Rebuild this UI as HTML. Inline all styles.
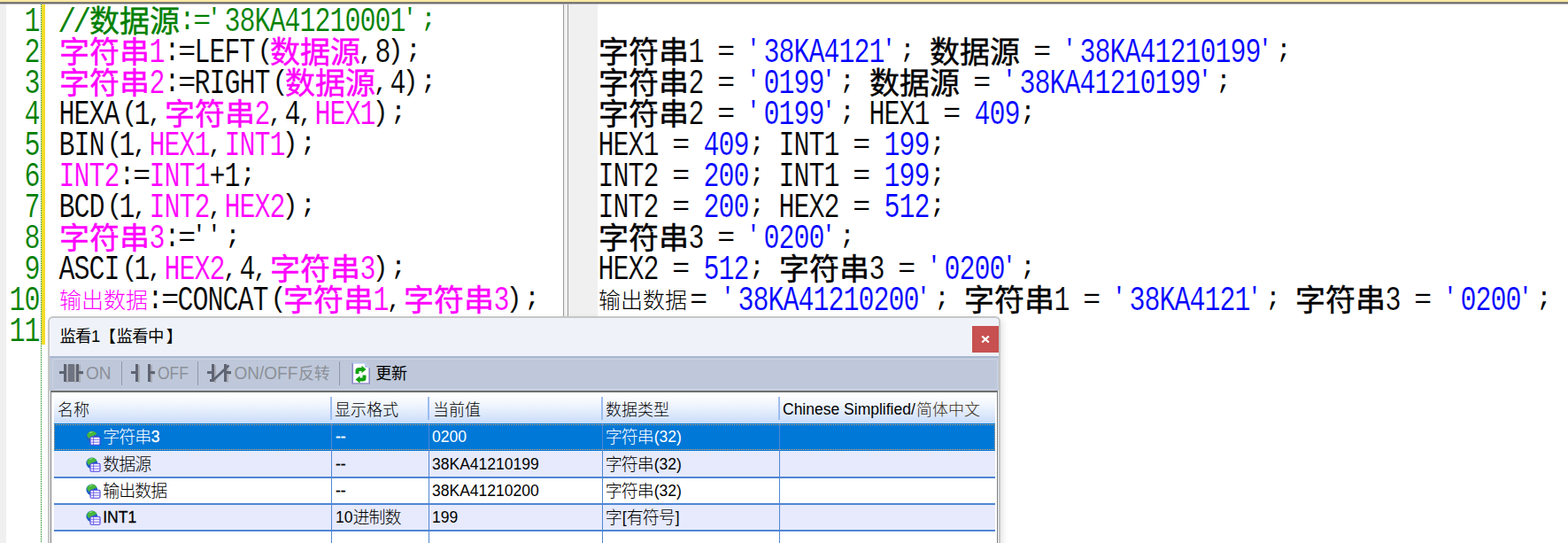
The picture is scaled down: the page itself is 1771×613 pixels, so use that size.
<!DOCTYPE html>
<html lang="zh">
<head>
<meta charset="utf-8">
<title>ST monitor</title>
<style>
html,body{margin:0;padding:0;background:#fff;}
body{width:1771px;height:613px;position:relative;overflow:hidden;font-family:"Liberation Sans",sans-serif;}
#page{position:absolute;left:0;top:0;width:1771px;height:613px;overflow:hidden;background:#fff;}
#page div,#page span,#page svg{position:absolute;}
.m{font-family:"Liberation Mono",monospace;font-size:30.0000px;line-height:1;white-space:pre;letter-spacing:-1.0000px;-webkit-text-stroke:0.18px #fff;transform-origin:0 0;transform:scaleY(1.2747);}
.p{transform:none;}
.s{font-family:"Liberation Sans",sans-serif;line-height:1;white-space:pre;}
.b{-webkit-text-stroke:0.3px currentColor;}
.c{overflow:visible;}
.k{font-family:"Liberation Sans","Noto Sans CJK SC",sans-serif;line-height:1;white-space:pre;margin-top:.03em;}
.g{font-size:34px;-webkit-text-stroke:.45px currentColor;}
.l{font-weight:300;}
.l25{font-size:25px;}
.l18{font-size:18px;}
.l19{font-size:19px;letter-spacing:-1px;}
</style>
</head>
<body>
<div id="page">
<!-- editor chrome -->
<div style="left:0;top:0;width:7px;height:613px;background:#f0f0f0"></div>
<div style="left:642px;top:5px;width:33px;height:608px;background:#f0f0f0"></div>
<div style="left:636px;top:4px;width:6px;height:609px;background:#f0f0f0;border-left:1px solid #9a9a9a;border-right:1px solid #9a9a9a;box-sizing:border-box"></div>
<div style="left:46px;top:5px;width:1px;height:608px;background:repeating-linear-gradient(to bottom,#008000 0 1px,#fff 1px 2px)"></div>
<div style="left:47px;top:5px;width:4px;height:384px;background:#f5dc2a"></div>
<div style="left:0;top:0;width:1771px;height:2px;background:#ffe8a2"></div>
<div style="left:0;top:2px;width:1771px;height:1px;background:#8c8880"></div>
<div style="left:0;top:3px;width:1771px;height:1px;background:#6a6a6a"></div>
<div style="left:0;top:4px;width:1771px;height:1px;background:#b4b4b4"></div>
<!-- code -->
<span class="m" style="left:27.50px;top:5.70px;color:#008000">1</span>
<span class="m" style="left:27.50px;top:40.70px;color:#008000">2</span>
<span class="m" style="left:27.50px;top:75.70px;color:#008000">3</span>
<span class="m" style="left:27.50px;top:110.70px;color:#008000">4</span>
<span class="m" style="left:27.50px;top:145.70px;color:#008000">5</span>
<span class="m" style="left:27.50px;top:180.70px;color:#008000">6</span>
<span class="m" style="left:27.50px;top:215.70px;color:#008000">7</span>
<span class="m" style="left:27.50px;top:250.70px;color:#008000">8</span>
<span class="m" style="left:27.50px;top:285.70px;color:#008000">9</span>
<span class="m" style="left:10.50px;top:320.70px;color:#008000">10</span>
<span class="m" style="left:10.50px;top:355.70px;color:#008000">11</span>
<span class="m" style="left:64.80px;top:5.70px;color:#008000;font-size:31px;transform:scale(1.15,1.2336)">/</span>
<span class="m" style="left:81.80px;top:5.70px;color:#008000;font-size:31px;transform:scale(1.15,1.2336)">/</span>
<span class="k g" style="left:101.00px;top:5.58px;color:#008000">数据源</span>
<span class="m" style="left:203.10px;top:5.81px;color:#008000;font-size:28px;transform:scaleY(1.3);-webkit-text-stroke:0">:</span>
<span class="m" style="left:218.32px;top:8.34px;color:#008000;font-size:29px;transform:scale(1.17,1.11)">=</span>
<span class="m" style="left:233.60px;top:6.55px;color:#008000;font-size:28px;transform:scaleY(1)">'</span>
<span class="m" style="left:253.50px;top:5.70px;color:#008000">38KA41210001</span>
<span class="m" style="left:454.60px;top:6.55px;color:#008000;font-size:28px;transform:scaleY(1)">'</span>
<span class="m" style="left:475.30px;top:7.98px;color:#008000;font-size:29px;transform:scaleY(1);-webkit-text-stroke:0">;</span>
<span class="k g" style="left:67.00px;top:40.58px;color:#ff00ff">字符串</span>
<span class="m" style="left:168.50px;top:40.70px;color:#ff00ff">1</span>
<span class="m" style="left:186.10px;top:40.81px;color:#000000;font-size:28px;transform:scaleY(1.3);-webkit-text-stroke:0">:</span>
<span class="m" style="left:201.32px;top:43.34px;color:#000000;font-size:29px;transform:scale(1.17,1.11)">=</span>
<span class="m" style="left:219.50px;top:40.70px;color:#000000">LEFT</span>
<span class="m" style="left:290.20px;top:42.25px;color:#000000;font-size:31px;transform:scaleY(1)">(</span>
<span class="k g" style="left:305.00px;top:40.58px;color:#ff00ff">数据源</span>
<span class="m" style="left:405.20px;top:47.08px;color:#000000;font-size:26px;transform:scaleY(1);-webkit-text-stroke:0">,</span>
<span class="m" style="left:423.50px;top:40.70px;color:#000000">8</span>
<span class="m" style="left:437.20px;top:42.25px;color:#000000;font-size:31px;transform:scaleY(1)">)</span>
<span class="m" style="left:458.30px;top:42.98px;color:#000000;font-size:29px;transform:scaleY(1);-webkit-text-stroke:0">;</span>
<span class="k g" style="left:67.00px;top:75.58px;color:#ff00ff">字符串</span>
<span class="m" style="left:168.50px;top:75.70px;color:#ff00ff">2</span>
<span class="m" style="left:186.10px;top:75.81px;color:#000000;font-size:28px;transform:scaleY(1.3);-webkit-text-stroke:0">:</span>
<span class="m" style="left:201.32px;top:78.34px;color:#000000;font-size:29px;transform:scale(1.17,1.11)">=</span>
<span class="m" style="left:219.50px;top:75.70px;color:#000000">RIGHT</span>
<span class="m" style="left:307.20px;top:77.25px;color:#000000;font-size:31px;transform:scaleY(1)">(</span>
<span class="k g" style="left:322.00px;top:75.58px;color:#ff00ff">数据源</span>
<span class="m" style="left:422.20px;top:82.08px;color:#000000;font-size:26px;transform:scaleY(1);-webkit-text-stroke:0">,</span>
<span class="m" style="left:440.50px;top:75.70px;color:#000000">4</span>
<span class="m" style="left:454.20px;top:77.25px;color:#000000;font-size:31px;transform:scaleY(1)">)</span>
<span class="m" style="left:475.30px;top:77.98px;color:#000000;font-size:29px;transform:scaleY(1);-webkit-text-stroke:0">;</span>
<span class="m" style="left:66.50px;top:110.70px;color:#000000">HEXA</span>
<span class="m" style="left:137.20px;top:112.25px;color:#000000;font-size:31px;transform:scaleY(1)">(</span>
<span class="m" style="left:151.50px;top:110.70px;color:#000000">1</span>
<span class="m" style="left:167.20px;top:117.08px;color:#000000;font-size:26px;transform:scaleY(1);-webkit-text-stroke:0">,</span>
<span class="k g" style="left:186.00px;top:110.58px;color:#ff00ff">字符串</span>
<span class="m" style="left:287.50px;top:110.70px;color:#ff00ff">2</span>
<span class="m" style="left:303.20px;top:117.08px;color:#000000;font-size:26px;transform:scaleY(1);-webkit-text-stroke:0">,</span>
<span class="m" style="left:321.50px;top:110.70px;color:#000000">4</span>
<span class="m" style="left:337.20px;top:117.08px;color:#000000;font-size:26px;transform:scaleY(1);-webkit-text-stroke:0">,</span>
<span class="m" style="left:355.50px;top:110.70px;color:#ff00ff">HEX1</span>
<span class="m" style="left:420.20px;top:112.25px;color:#000000;font-size:31px;transform:scaleY(1)">)</span>
<span class="m" style="left:441.30px;top:112.98px;color:#000000;font-size:29px;transform:scaleY(1);-webkit-text-stroke:0">;</span>
<span class="m" style="left:66.50px;top:145.70px;color:#000000">BIN</span>
<span class="m" style="left:120.20px;top:147.25px;color:#000000;font-size:31px;transform:scaleY(1)">(</span>
<span class="m" style="left:134.50px;top:145.70px;color:#000000">1</span>
<span class="m" style="left:150.20px;top:152.08px;color:#000000;font-size:26px;transform:scaleY(1);-webkit-text-stroke:0">,</span>
<span class="m" style="left:168.50px;top:145.70px;color:#ff00ff">HEX1</span>
<span class="m" style="left:235.20px;top:152.08px;color:#000000;font-size:26px;transform:scaleY(1);-webkit-text-stroke:0">,</span>
<span class="m" style="left:253.50px;top:145.70px;color:#ff00ff">INT1</span>
<span class="m" style="left:318.20px;top:147.25px;color:#000000;font-size:31px;transform:scaleY(1)">)</span>
<span class="m" style="left:339.30px;top:147.98px;color:#000000;font-size:29px;transform:scaleY(1);-webkit-text-stroke:0">;</span>
<span class="m" style="left:66.50px;top:180.70px;color:#ff00ff">INT2</span>
<span class="m" style="left:135.10px;top:180.81px;color:#000000;font-size:28px;transform:scaleY(1.3);-webkit-text-stroke:0">:</span>
<span class="m" style="left:150.32px;top:183.34px;color:#000000;font-size:29px;transform:scale(1.17,1.11)">=</span>
<span class="m" style="left:168.50px;top:180.70px;color:#ff00ff">INT1</span>
<span class="m" style="left:236.50px;top:180.70px;color:#000000">+1</span>
<span class="m" style="left:271.30px;top:182.98px;color:#000000;font-size:29px;transform:scaleY(1);-webkit-text-stroke:0">;</span>
<span class="m" style="left:66.50px;top:215.70px;color:#000000">BCD</span>
<span class="m" style="left:120.20px;top:217.25px;color:#000000;font-size:31px;transform:scaleY(1)">(</span>
<span class="m" style="left:134.50px;top:215.70px;color:#000000">1</span>
<span class="m" style="left:150.20px;top:222.08px;color:#000000;font-size:26px;transform:scaleY(1);-webkit-text-stroke:0">,</span>
<span class="m" style="left:168.50px;top:215.70px;color:#ff00ff">INT2</span>
<span class="m" style="left:235.20px;top:222.08px;color:#000000;font-size:26px;transform:scaleY(1);-webkit-text-stroke:0">,</span>
<span class="m" style="left:253.50px;top:215.70px;color:#ff00ff">HEX2</span>
<span class="m" style="left:318.20px;top:217.25px;color:#000000;font-size:31px;transform:scaleY(1)">)</span>
<span class="m" style="left:339.30px;top:217.98px;color:#000000;font-size:29px;transform:scaleY(1);-webkit-text-stroke:0">;</span>
<span class="k g" style="left:67.00px;top:250.58px;color:#ff00ff">字符串</span>
<span class="m" style="left:168.50px;top:250.70px;color:#ff00ff">3</span>
<span class="m" style="left:186.10px;top:250.81px;color:#000000;font-size:28px;transform:scaleY(1.3);-webkit-text-stroke:0">:</span>
<span class="m" style="left:201.32px;top:253.34px;color:#000000;font-size:29px;transform:scale(1.17,1.11)">=</span>
<span class="m" style="left:216.60px;top:251.55px;color:#000000;font-size:28px;transform:scaleY(1)">'</span>
<span class="m" style="left:233.60px;top:251.55px;color:#000000;font-size:28px;transform:scaleY(1)">'</span>
<span class="m" style="left:254.30px;top:252.98px;color:#000000;font-size:29px;transform:scaleY(1);-webkit-text-stroke:0">;</span>
<span class="m" style="left:66.50px;top:285.70px;color:#000000">ASCI</span>
<span class="m" style="left:137.20px;top:287.25px;color:#000000;font-size:31px;transform:scaleY(1)">(</span>
<span class="m" style="left:151.50px;top:285.70px;color:#000000">1</span>
<span class="m" style="left:167.20px;top:292.08px;color:#000000;font-size:26px;transform:scaleY(1);-webkit-text-stroke:0">,</span>
<span class="m" style="left:185.50px;top:285.70px;color:#ff00ff">HEX2</span>
<span class="m" style="left:252.20px;top:292.08px;color:#000000;font-size:26px;transform:scaleY(1);-webkit-text-stroke:0">,</span>
<span class="m" style="left:270.50px;top:285.70px;color:#000000">4</span>
<span class="m" style="left:286.20px;top:292.08px;color:#000000;font-size:26px;transform:scaleY(1);-webkit-text-stroke:0">,</span>
<span class="k g" style="left:305.00px;top:285.58px;color:#ff00ff">字符串</span>
<span class="m" style="left:406.50px;top:285.70px;color:#ff00ff">3</span>
<span class="m" style="left:420.20px;top:287.25px;color:#000000;font-size:31px;transform:scaleY(1)">)</span>
<span class="m" style="left:441.30px;top:287.98px;color:#000000;font-size:29px;transform:scaleY(1);-webkit-text-stroke:0">;</span>
<span class="k l l25" style="left:67.00px;top:326.70px;color:#ff00ff">输出数据</span>
<span class="m" style="left:167.10px;top:320.81px;color:#000000;font-size:28px;transform:scaleY(1.3);-webkit-text-stroke:0">:</span>
<span class="m" style="left:182.32px;top:323.34px;color:#000000;font-size:29px;transform:scale(1.17,1.11)">=</span>
<span class="m" style="left:200.50px;top:320.70px;color:#000000">CONCAT</span>
<span class="m" style="left:305.20px;top:322.25px;color:#000000;font-size:31px;transform:scaleY(1)">(</span>
<span class="k g" style="left:320.00px;top:320.58px;color:#ff00ff">字符串</span>
<span class="m" style="left:421.50px;top:320.70px;color:#ff00ff">1</span>
<span class="m" style="left:437.20px;top:327.08px;color:#000000;font-size:26px;transform:scaleY(1);-webkit-text-stroke:0">,</span>
<span class="k g" style="left:456.00px;top:320.58px;color:#ff00ff">字符串</span>
<span class="m" style="left:557.50px;top:320.70px;color:#ff00ff">3</span>
<span class="m" style="left:571.20px;top:322.25px;color:#000000;font-size:31px;transform:scaleY(1)">)</span>
<span class="m" style="left:592.30px;top:322.98px;color:#000000;font-size:29px;transform:scaleY(1);-webkit-text-stroke:0">;</span>
<span class="k g" style="left:676.00px;top:40.58px;color:#000000">字符串</span>
<span class="m" style="left:777.50px;top:40.70px;color:#000000">1 </span>
<span class="m" style="left:810.32px;top:43.34px;color:#000000;font-size:29px;transform:scale(1.17,1.11)">=</span>
<span class="m" style="left:842.60px;top:41.55px;color:#0000ff;font-size:28px;transform:scaleY(1)">'</span>
<span class="m" style="left:862.50px;top:40.70px;color:#0000ff">38KA4121</span>
<span class="m" style="left:995.60px;top:41.55px;color:#0000ff;font-size:28px;transform:scaleY(1)">'</span>
<span class="m" style="left:1016.30px;top:42.98px;color:#000000;font-size:29px;transform:scaleY(1);-webkit-text-stroke:0">;</span>
<span class="k g" style="left:1050.00px;top:40.58px;color:#000000">数据源</span>
<span class="m" style="left:1167.32px;top:43.34px;color:#000000;font-size:29px;transform:scale(1.17,1.11)">=</span>
<span class="m" style="left:1199.60px;top:41.55px;color:#0000ff;font-size:28px;transform:scaleY(1)">'</span>
<span class="m" style="left:1219.50px;top:40.70px;color:#0000ff">38KA41210199</span>
<span class="m" style="left:1420.60px;top:41.55px;color:#0000ff;font-size:28px;transform:scaleY(1)">'</span>
<span class="m" style="left:1441.30px;top:42.98px;color:#000000;font-size:29px;transform:scaleY(1);-webkit-text-stroke:0">;</span>
<span class="k g" style="left:676.00px;top:75.58px;color:#000000">字符串</span>
<span class="m" style="left:777.50px;top:75.70px;color:#000000">2 </span>
<span class="m" style="left:810.32px;top:78.34px;color:#000000;font-size:29px;transform:scale(1.17,1.11)">=</span>
<span class="m" style="left:842.60px;top:76.55px;color:#0000ff;font-size:28px;transform:scaleY(1)">'</span>
<span class="m" style="left:862.50px;top:75.70px;color:#0000ff">0199</span>
<span class="m" style="left:927.60px;top:76.55px;color:#0000ff;font-size:28px;transform:scaleY(1)">'</span>
<span class="m" style="left:948.30px;top:77.98px;color:#000000;font-size:29px;transform:scaleY(1);-webkit-text-stroke:0">;</span>
<span class="k g" style="left:982.00px;top:75.58px;color:#000000">数据源</span>
<span class="m" style="left:1099.32px;top:78.34px;color:#000000;font-size:29px;transform:scale(1.17,1.11)">=</span>
<span class="m" style="left:1131.60px;top:76.55px;color:#0000ff;font-size:28px;transform:scaleY(1)">'</span>
<span class="m" style="left:1151.50px;top:75.70px;color:#0000ff">38KA41210199</span>
<span class="m" style="left:1352.60px;top:76.55px;color:#0000ff;font-size:28px;transform:scaleY(1)">'</span>
<span class="m" style="left:1373.30px;top:77.98px;color:#000000;font-size:29px;transform:scaleY(1);-webkit-text-stroke:0">;</span>
<span class="k g" style="left:676.00px;top:110.58px;color:#000000">字符串</span>
<span class="m" style="left:777.50px;top:110.70px;color:#000000">2 </span>
<span class="m" style="left:810.32px;top:113.34px;color:#000000;font-size:29px;transform:scale(1.17,1.11)">=</span>
<span class="m" style="left:842.60px;top:111.55px;color:#0000ff;font-size:28px;transform:scaleY(1)">'</span>
<span class="m" style="left:862.50px;top:110.70px;color:#0000ff">0199</span>
<span class="m" style="left:927.60px;top:111.55px;color:#0000ff;font-size:28px;transform:scaleY(1)">'</span>
<span class="m" style="left:948.30px;top:112.98px;color:#000000;font-size:29px;transform:scaleY(1);-webkit-text-stroke:0">;</span>
<span class="m" style="left:964.50px;top:110.70px;color:#000000"> HEX1 </span>
<span class="m" style="left:1065.32px;top:113.34px;color:#000000;font-size:29px;transform:scale(1.17,1.11)">=</span>
<span class="m" style="left:1100.50px;top:110.70px;color:#0000ff">409</span>
<span class="m" style="left:1152.30px;top:112.98px;color:#000000;font-size:29px;transform:scaleY(1);-webkit-text-stroke:0">;</span>
<span class="m" style="left:675.50px;top:145.70px;color:#000000">HEX1 </span>
<span class="m" style="left:759.32px;top:148.34px;color:#000000;font-size:29px;transform:scale(1.17,1.11)">=</span>
<span class="m" style="left:794.50px;top:145.70px;color:#0000ff">409</span>
<span class="m" style="left:846.30px;top:147.98px;color:#000000;font-size:29px;transform:scaleY(1);-webkit-text-stroke:0">;</span>
<span class="m" style="left:862.50px;top:145.70px;color:#000000"> INT1 </span>
<span class="m" style="left:963.32px;top:148.34px;color:#000000;font-size:29px;transform:scale(1.17,1.11)">=</span>
<span class="m" style="left:998.50px;top:145.70px;color:#0000ff">199</span>
<span class="m" style="left:1050.30px;top:147.98px;color:#000000;font-size:29px;transform:scaleY(1);-webkit-text-stroke:0">;</span>
<span class="m" style="left:675.50px;top:180.70px;color:#000000">INT2 </span>
<span class="m" style="left:759.32px;top:183.34px;color:#000000;font-size:29px;transform:scale(1.17,1.11)">=</span>
<span class="m" style="left:794.50px;top:180.70px;color:#0000ff">200</span>
<span class="m" style="left:846.30px;top:182.98px;color:#000000;font-size:29px;transform:scaleY(1);-webkit-text-stroke:0">;</span>
<span class="m" style="left:862.50px;top:180.70px;color:#000000"> INT1 </span>
<span class="m" style="left:963.32px;top:183.34px;color:#000000;font-size:29px;transform:scale(1.17,1.11)">=</span>
<span class="m" style="left:998.50px;top:180.70px;color:#0000ff">199</span>
<span class="m" style="left:1050.30px;top:182.98px;color:#000000;font-size:29px;transform:scaleY(1);-webkit-text-stroke:0">;</span>
<span class="m" style="left:675.50px;top:215.70px;color:#000000">INT2 </span>
<span class="m" style="left:759.32px;top:218.34px;color:#000000;font-size:29px;transform:scale(1.17,1.11)">=</span>
<span class="m" style="left:794.50px;top:215.70px;color:#0000ff">200</span>
<span class="m" style="left:846.30px;top:217.98px;color:#000000;font-size:29px;transform:scaleY(1);-webkit-text-stroke:0">;</span>
<span class="m" style="left:862.50px;top:215.70px;color:#000000"> HEX2 </span>
<span class="m" style="left:963.32px;top:218.34px;color:#000000;font-size:29px;transform:scale(1.17,1.11)">=</span>
<span class="m" style="left:998.50px;top:215.70px;color:#0000ff">512</span>
<span class="m" style="left:1050.30px;top:217.98px;color:#000000;font-size:29px;transform:scaleY(1);-webkit-text-stroke:0">;</span>
<span class="k g" style="left:676.00px;top:250.58px;color:#000000">字符串</span>
<span class="m" style="left:777.50px;top:250.70px;color:#000000">3 </span>
<span class="m" style="left:810.32px;top:253.34px;color:#000000;font-size:29px;transform:scale(1.17,1.11)">=</span>
<span class="m" style="left:842.60px;top:251.55px;color:#0000ff;font-size:28px;transform:scaleY(1)">'</span>
<span class="m" style="left:862.50px;top:250.70px;color:#0000ff">0200</span>
<span class="m" style="left:927.60px;top:251.55px;color:#0000ff;font-size:28px;transform:scaleY(1)">'</span>
<span class="m" style="left:948.30px;top:252.98px;color:#000000;font-size:29px;transform:scaleY(1);-webkit-text-stroke:0">;</span>
<span class="m" style="left:675.50px;top:285.70px;color:#000000">HEX2 </span>
<span class="m" style="left:759.32px;top:288.34px;color:#000000;font-size:29px;transform:scale(1.17,1.11)">=</span>
<span class="m" style="left:794.50px;top:285.70px;color:#0000ff">512</span>
<span class="m" style="left:846.30px;top:287.98px;color:#000000;font-size:29px;transform:scaleY(1);-webkit-text-stroke:0">;</span>
<span class="k g" style="left:880.00px;top:285.58px;color:#000000">字符串</span>
<span class="m" style="left:981.50px;top:285.70px;color:#000000">3 </span>
<span class="m" style="left:1014.32px;top:288.34px;color:#000000;font-size:29px;transform:scale(1.17,1.11)">=</span>
<span class="m" style="left:1046.60px;top:286.55px;color:#0000ff;font-size:28px;transform:scaleY(1)">'</span>
<span class="m" style="left:1066.50px;top:285.70px;color:#0000ff">0200</span>
<span class="m" style="left:1131.60px;top:286.55px;color:#0000ff;font-size:28px;transform:scaleY(1)">'</span>
<span class="m" style="left:1152.30px;top:287.98px;color:#000000;font-size:29px;transform:scaleY(1);-webkit-text-stroke:0">;</span>
<span class="k l l25" style="left:676.00px;top:326.70px;color:#000000">输出数据</span>
<span class="m" style="left:779.32px;top:323.34px;color:#000000;font-size:29px;transform:scale(1.17,1.11)">=</span>
<span class="m" style="left:813.60px;top:321.55px;color:#0000ff;font-size:28px;transform:scaleY(1)">'</span>
<span class="m" style="left:833.50px;top:320.70px;color:#0000ff">38KA41210200</span>
<span class="m" style="left:1034.60px;top:321.55px;color:#0000ff;font-size:28px;transform:scaleY(1)">'</span>
<span class="m" style="left:1055.30px;top:322.98px;color:#000000;font-size:29px;transform:scaleY(1);-webkit-text-stroke:0">;</span>
<span class="k g" style="left:1089.00px;top:320.58px;color:#000000">字符串</span>
<span class="m" style="left:1190.50px;top:320.70px;color:#000000">1 </span>
<span class="m" style="left:1223.32px;top:323.34px;color:#000000;font-size:29px;transform:scale(1.17,1.11)">=</span>
<span class="m" style="left:1255.60px;top:321.55px;color:#0000ff;font-size:28px;transform:scaleY(1)">'</span>
<span class="m" style="left:1275.50px;top:320.70px;color:#0000ff">38KA4121</span>
<span class="m" style="left:1408.60px;top:321.55px;color:#0000ff;font-size:28px;transform:scaleY(1)">'</span>
<span class="m" style="left:1429.30px;top:322.98px;color:#000000;font-size:29px;transform:scaleY(1);-webkit-text-stroke:0">;</span>
<span class="k g" style="left:1463.00px;top:320.58px;color:#000000">字符串</span>
<span class="m" style="left:1564.50px;top:320.70px;color:#000000">3 </span>
<span class="m" style="left:1597.32px;top:323.34px;color:#000000;font-size:29px;transform:scale(1.17,1.11)">=</span>
<span class="m" style="left:1629.60px;top:321.55px;color:#0000ff;font-size:28px;transform:scaleY(1)">'</span>
<span class="m" style="left:1649.50px;top:320.70px;color:#0000ff">0200</span>
<span class="m" style="left:1714.60px;top:321.55px;color:#0000ff;font-size:28px;transform:scaleY(1)">'</span>
<span class="m" style="left:1735.30px;top:322.98px;color:#000000;font-size:29px;transform:scaleY(1);-webkit-text-stroke:0">;</span>
<!-- monitor window -->
<div id="win" style="left:54px;top:357px;width:1076px;height:262px;box-sizing:border-box;border:2px solid #c6c6c6;border-radius:6px 6px 0 0;background:#eff3f9;box-shadow:3px 2px 6px rgba(0,0,0,.10)"></div>
<div style="left:1098px;top:368px;width:30px;height:30px;background:#c75050"></div>
<svg style="left:1108px;top:378px;width:10px;height:10px" viewBox="0 0 10 10"><path d="M1.2 1.5L8.8 8.5M8.8 1.5L1.2 8.5" stroke="#fff" stroke-width="2.3" fill="none"/></svg>
<!-- toolbar -->
<div style="left:56px;top:402px;width:1072px;height:39px;background:#bec8da;border-top:2px solid #a9b7d0;box-sizing:border-box"></div>
<div style="left:59px;top:405px;width:1068px;height:35px;border:1px solid #ccd4e2;border-radius:3px;box-sizing:border-box"></div>
<div style="left:137px;top:408px;width:1px;height:27px;background:#8d98ad"></div>
<div style="left:223px;top:408px;width:1px;height:27px;background:#8d98ad"></div>
<div style="left:383px;top:408px;width:1px;height:27px;background:#8d98ad"></div>
<!-- ON / OFF / toggle icons (page coordinates) -->
<svg style="left:60px;top:403px;width:210px;height:37px" viewBox="60 403 210 37" shape-rendering="crispEdges">
<g fill="#a9abb4"><rect x="75" y="412" width="2" height="20"/><rect x="84" y="412" width="2" height="20"/><rect x="89" y="412" width="2" height="20"/><rect x="91" y="422" width="3" height="1"/>
<rect x="156" y="412" width="2" height="20"/><rect x="170" y="412" width="2" height="20"/><rect x="172" y="422" width="3" height="1"/>
<rect x="242" y="412" width="2" height="20"/><rect x="256" y="412" width="2" height="20"/><rect x="258" y="422" width="3" height="1"/></g>
<g fill="#5f6473"><rect x="67" y="419" width="5" height="3"/><rect x="72" y="411" width="3" height="20"/><rect x="86" y="411" width="3" height="20"/><rect x="89" y="419" width="5" height="3"/>
<rect x="148" y="419" width="5" height="3"/><rect x="153" y="411" width="3" height="20"/><rect x="167" y="411" width="3" height="20"/><rect x="170" y="419" width="5" height="3"/>
<rect x="234" y="419" width="5" height="3"/><rect x="239" y="411" width="3" height="20"/><rect x="253" y="411" width="3" height="20"/><rect x="256" y="419" width="5" height="3"/>
<rect x="237" y="428" width="5" height="3"/></g>
<rect x="77" y="411" width="7" height="20" fill="#6f7482"/>
<path d="M240.500 429.500L258.500 412.500" stroke="#5f6473" stroke-width="2.600" fill="none" shape-rendering="auto"/>
</svg>
<!-- refresh icon -->
<svg style="left:397px;top:409px;width:21px;height:25px" viewBox="0 0 21 25">
<path d="M1.5 .5H15L20.5 6V24.5H1.5Z" fill="#fff"/>
<path d="M15 .5V6H20.5Z" fill="#b9c8f2"/>
<path d="M1.2 .5V24H20.2V6" fill="none" stroke="#8f8bc8" stroke-width="1.7"/>
<path d="M1 .9H15.2" stroke="#a9c0ee" stroke-width="1.3" fill="none"/>
<path d="M4.5 13V9.5Q4.500 6 8.500 6H11.500V3.800L16.500 8 11.500 12.200V10H8.500V13Z" fill="#12a112"/>
<path d="M16.500 14.500V18Q16.500 21.500 12.500 21.500H9.500V23.700L4.500 19.500 9.500 15.300V17.500H12.500V14.500Z" fill="#12a112"/>
</svg>
<!-- list -->
<div style="left:57px;top:441px;width:1070px;height:180px;background:#fff;border:1px solid #7d7d7d;border-top:2px solid #6f6f6f;box-sizing:border-box"></div>
<div style="left:61px;top:445px;width:1063px;height:33px;background:linear-gradient(to bottom,#ffffff 0%,#f1f6fe 35%,#d6e4fb 80%,#c6daf8 100%)"></div>
<div style="left:373px;top:448px;width:2px;height:26px;background:#9cbdf0"></div>
<div style="left:483px;top:448px;width:2px;height:26px;background:#9cbdf0"></div>
<div style="left:679px;top:448px;width:2px;height:26px;background:#9cbdf0"></div>
<div style="left:879px;top:448px;width:2px;height:26px;background:#9cbdf0"></div>
<!-- rows -->
<div style="left:61px;top:478px;width:1063px;height:30.5px;background:#0078d7"></div>
<div style="left:61px;top:479px;width:1063px;height:29px;box-sizing:border-box;border:1px dotted #eda765"></div>
<div style="left:61px;top:508.5px;width:1063px;height:1px;background:#7ea6e6"></div>
<div style="left:61px;top:509px;width:1063px;height:29px;background:#e6eafc"></div>
<div style="left:61px;top:569px;width:1063px;height:29px;background:#e6eafc"></div>
<div style="left:61px;top:538px;width:1063px;height:1.5px;background:#4f86d6"></div>
<div style="left:61px;top:568px;width:1063px;height:1.5px;background:#4f86d6"></div>
<div style="left:61px;top:598px;width:1063px;height:1.5px;background:#4f86d6"></div>
<div style="left:373.5px;top:478px;width:1.5px;height:135px;background:#4f86d6"></div>
<div style="left:483.5px;top:478px;width:1.5px;height:135px;background:#4f86d6"></div>
<div style="left:679.5px;top:478px;width:1.5px;height:135px;background:#4f86d6"></div>
<div style="left:879.5px;top:478px;width:1.5px;height:135px;background:#4f86d6"></div>
<!-- row icons -->
<svg style="left:97px;top:486.3px;width:17px;height:17px" viewBox="0 0 17 17"><use href="#ico"/></svg>
<svg style="left:97px;top:516.3px;width:17px;height:17px" viewBox="0 0 17 17"><use href="#ico"/></svg>
<svg style="left:97px;top:546.3px;width:17px;height:17px" viewBox="0 0 17 17"><use href="#ico"/></svg>
<svg style="left:97px;top:576.3px;width:17px;height:17px" viewBox="0 0 17 17"><use href="#ico"/></svg>
<svg width="0" height="0"><defs><g id="ico">
<circle cx="6.7" cy="6.9" r="6.3" fill="#1f62c4"/>
<path d="M1.2 5.2C2 2.4 4.6 .7 7.3 .8 9.6 1 11.4 2.3 12.3 4.1 11 4.6 10 5.8 8.4 6 7 6.2 6.4 7.6 5.2 8.6 4 9.4 2.2 8.6 1.2 5.2Z" fill="#46b83a"/>
<path d="M3.2 2.6C4.6 1.5 6.4 1.3 7.6 1.7 6.6 2.3 5 2.6 3.2 2.6Z" fill="#b8ecb0"/>
<rect x="5" y="7.2" width="11" height="9" rx="1.2" fill="#f6f4ff" stroke="#4c3ee4" stroke-width="1.1"/>
<path d="M5.4 10.2H15.6M5.4 13.2H15.6M8.6 7.6V16" stroke="#5a4ee6" stroke-width=".8" fill="none"/>
</g></defs></svg>
<span class="k" style="left:67.40px;top:370.71px;font-size:18.4px;letter-spacing:-0.8px;color:#000000">监看</span>
<span class="k" style="left:112.50px;top:370.71px;font-size:18.4px;color:#000000">【</span>
<span class="k" style="left:131.60px;top:370.71px;font-size:18.4px;letter-spacing:-0.7px;color:#000000">监看中</span>
<span class="k" style="left:187.70px;top:370.71px;font-size:18.4px;color:#000000">】</span>
<span class="s" style="left:103.00px;top:370.94px;font-size:18.5px;color:#000000;">1</span>
<span class="s" style="left:97.00px;top:412.12px;font-size:19px;color:#8c9098;transform-origin:0 100%;transform:scaleY(1.07)">ON</span>
<span class="s" style="left:178.00px;top:412.12px;font-size:19px;color:#8c9098;transform-origin:0 100%;transform:scale(.92,1.07)">OFF</span>
<span class="s" style="left:264.50px;top:412.12px;font-size:19px;color:#8c9098;transform-origin:0 100%;transform:scaleY(1.07)">ON/OFF</span>
<span class="k" style="left:337.00px;top:412.46px;font-size:18px;letter-spacing:-0.2px;color:#8c9098">反转</span>
<span class="k" style="left:424.20px;top:412.46px;font-size:18px;letter-spacing:-0.2px;color:#000000">更新</span>
<span class="k l l18" style="left:65.00px;top:453.36px;color:#000000">名称</span>
<span class="k l l18" style="left:378.00px;top:453.36px;color:#000000">显示格式</span>
<span class="k l l18" style="left:489.00px;top:453.36px;color:#000000">当前值</span>
<span class="k l l18" style="left:684.00px;top:453.36px;color:#000000">数据类型</span>
<span class="s" style="left:884.00px;top:454.19px;font-size:17.5px;color:#000000;">Chinese Simplified/</span>
<span class="k l l18" style="left:1035.00px;top:453.36px;color:#3a3020">简体中文</span>
<span class="k l l19" style="left:116.20px;top:483.58px;color:#ffffff">字符串</span>
<span class="s b" style="left:170.70px;top:484.69px;font-size:17.5px;color:#ffffff;">3</span>
<span class="s b" style="left:379.00px;top:484.69px;font-size:17.5px;color:#ffffff;">--</span>
<span class="s" style="left:488.00px;top:484.69px;font-size:17.5px;color:#ffffff;">0200</span>
<span class="k l l19" style="left:683.80px;top:483.58px;color:#ffffff">字符串</span>
<span class="s" style="left:738.80px;top:484.69px;font-size:17.5px;color:#ffffff;">(32)</span>
<span class="k l l19" style="left:116.20px;top:514.58px;color:#000000">数据源</span>
<span class="s b" style="left:379.00px;top:515.69px;font-size:17.5px;color:#000000;">--</span>
<span class="s" style="left:488.00px;top:515.69px;font-size:17.5px;color:#000000;">38KA41210199</span>
<span class="k l l19" style="left:683.80px;top:514.58px;color:#000000">字符串</span>
<span class="s" style="left:738.80px;top:515.69px;font-size:17.5px;color:#000000;">(32)</span>
<span class="k l l19" style="left:116.20px;top:544.58px;color:#000000">输出数据</span>
<span class="s b" style="left:379.00px;top:545.69px;font-size:17.5px;color:#000000;">--</span>
<span class="s" style="left:488.00px;top:545.69px;font-size:17.5px;color:#000000;">38KA41210200</span>
<span class="k l l19" style="left:683.80px;top:544.58px;color:#000000">字符串</span>
<span class="s" style="left:738.80px;top:545.69px;font-size:17.5px;color:#000000;">(32)</span>
<span class="s b" style="left:116.20px;top:575.69px;font-size:17.5px;color:#000000;">INT1</span>
<span class="s" style="left:379.00px;top:575.69px;font-size:17.5px;color:#000000;">10</span>
<span class="k l l19" style="left:398.50px;top:574.58px;color:#000000">进制数</span>
<span class="s" style="left:488.00px;top:575.69px;font-size:17.5px;color:#000000;">199</span>
<span class="k l l19" style="left:683.80px;top:574.58px;color:#000000">字</span>
<span class="s" style="left:702.80px;top:575.69px;font-size:17.5px;color:#000000;">[</span>
<span class="k l l19" style="left:707.80px;top:574.58px;color:#000000">有符号</span>
<span class="s" style="left:762.80px;top:575.69px;font-size:17.5px;color:#000000;">]</span>
</div>
</body>
</html>
